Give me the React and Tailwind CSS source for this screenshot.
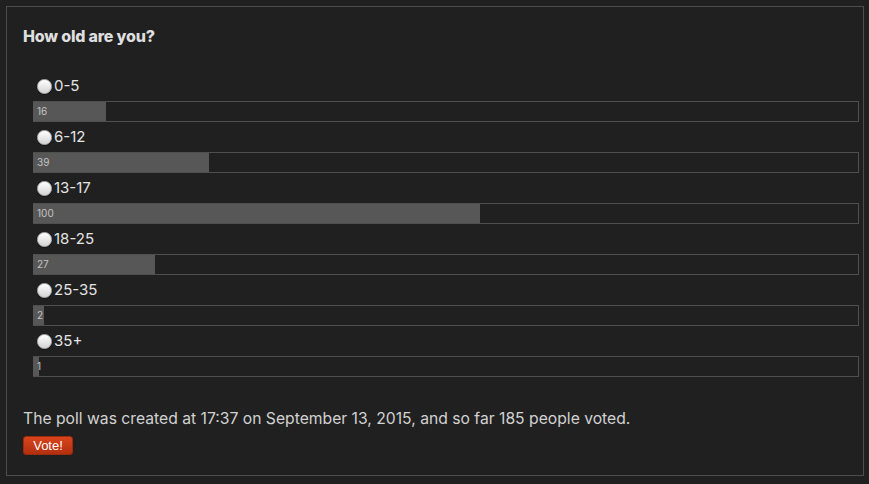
import { useState } from "react";

const options = [
  { label: "0-5", votes: 16 },
  { label: "6-12", votes: 39 },
  { label: "13-17", votes: 100 },
  { label: "18-25", votes: 27 },
  { label: "25-35", votes: 2 },
  { label: "35+", votes: 1 },
];

const total = options.reduce((sum, o) => sum + o.votes, 0);

function PollOption({ option, checked, onSelect }) {
  const pct = (option.votes / total) * 100;
  return (
    <li>
      <label className="flex items-center h-[30px] pl-[4px] cursor-pointer">
        <input
          type="radio"
          name="poll"
          checked={checked}
          onChange={onSelect}
          className="sr-only"
        />
        <span className="w-[15px] h-[15px] rounded-full bg-gradient-to-b from-white to-[#d4d4d4] border border-[#b8b8b8] shadow-[0_1px_1px_rgba(0,0,0,0.4)]" />
        <span className="ml-[2px] text-[15px] leading-5 text-[#e4e4e4]">
          {option.label}
        </span>
      </label>
      <div className="relative h-[21px] w-[826px] border border-[#4f4f4f]">
        <div
          className="h-full bg-[#575757] -ml-px"
          style={{ width: `calc(${pct}% + 2px)` }}
        />
        <span className="absolute left-[3px] top-0 h-full flex items-center text-[10px] text-[#c4c4c4] whitespace-nowrap">
          {option.votes}
        </span>
      </div>
    </li>
  );
}

export default function App() {
  const [selected, setSelected] = useState(null);

  return (
    <div
      className="min-h-[484px] bg-[#202020] pt-[6px] pl-[6px]"
      style={{ fontFamily: "Inter, 'Liberation Sans', sans-serif" }}
    >
      <div className="w-[858px] h-[470px] border border-[#4d4d4d] pt-[19px] pl-[16px] pr-[4px]">
        <h2 className="text-[16px] leading-5 font-extrabold text-[#dedede] tracking-[-0.2px]">
          How old are you?
        </h2>
        <ul className="mt-[25px] ml-[10px]">
          {options.map((o, i) => (
            <PollOption
              key={o.label}
              option={o}
              checked={selected === i}
              onSelect={() => setSelected(i)}
            />
          ))}
        </ul>
        <p className="mt-[32px] text-[15.7px] leading-5 text-[#d2d2d2]">
          The poll was created at 17:37 on September 13, 2015, and so far {total} people voted.
        </p>
        <button
          className="mt-[7px] w-[50px] h-[19px] rounded-[3px] bg-gradient-to-b from-[#d9441c] to-[#b3300f] border border-[#9c2a0c] text-white text-[13px] leading-none"
          style={{ fontFamily: "'Liberation Sans', Arial, sans-serif" }}
        >
          Vote!
        </button>
      </div>
    </div>
  );
}
